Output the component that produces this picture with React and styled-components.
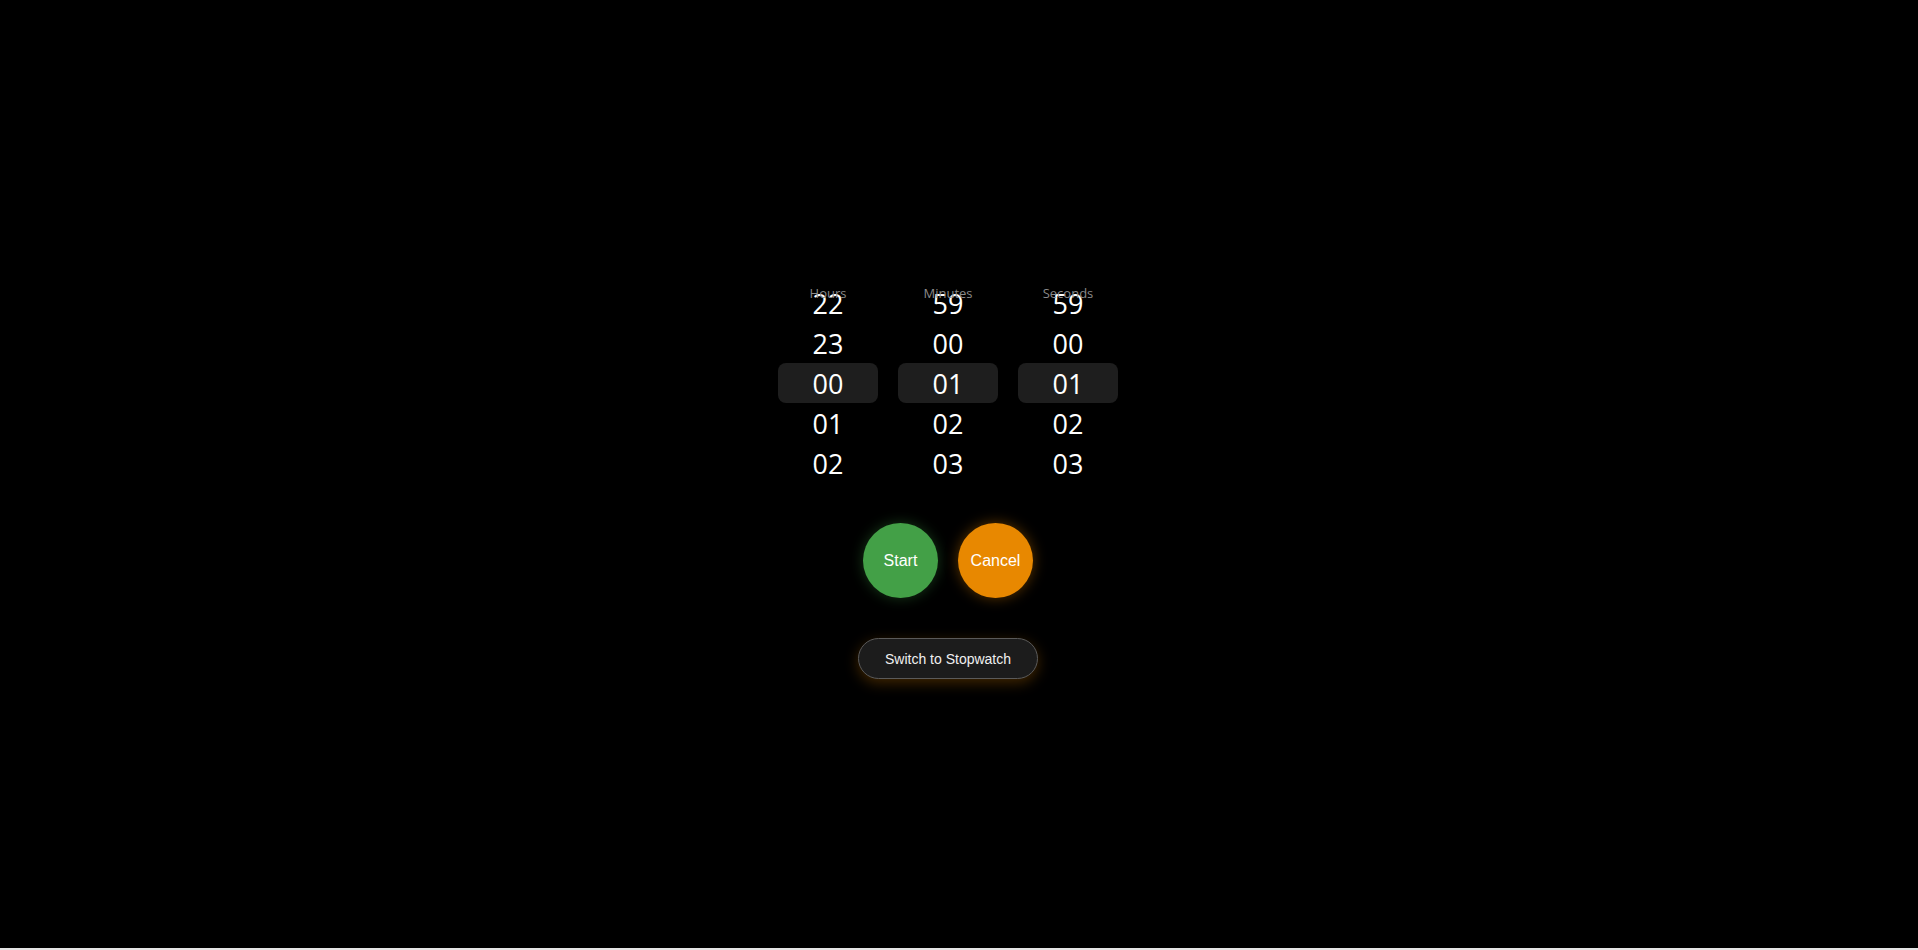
import React, { useState } from "react";
import styled, { createGlobalStyle } from "styled-components";

const GlobalStyle = createGlobalStyle`
  html, body {
    margin: 0;
    padding: 0;
    background: #e4e4e4;
  }
  * { box-sizing: border-box; }
`;

const Page = styled.div`
  height: 948px;
  background: #000;
  display: flex;
  flex-direction: column;
  align-items: center;
  justify-content: center;
  padding: 14px 22px 0 0;
  gap: 40px;
`;

const Picker = styled.div`
  display: flex;
  gap: 20px;
`;

const Column = styled.div`
  position: relative;
  width: 100px;
  height: 200px;
  display: flex;
  flex-direction: column;
`;

const Label = styled.span`
  position: absolute;
  top: 2px;
  left: 0;
  right: 0;
  text-align: center;
  font-family: "Open Sans", "Noto Sans", sans-serif;
  font-size: 13px;
  color: #8a8a8a;
  line-height: 16px;
`;

const Item = styled.div`
  position: relative;
  height: 40px;
  display: flex;
  align-items: center;
  justify-content: center;
  font-family: "Open Sans", "Noto Sans", sans-serif;
  font-size: 27px;
  color: #fff;
  border-radius: 8px;
  background: ${(p) => (p.$active ? "#1e1e1e" : "transparent")};
`;

const Controls = styled.div`
  display: flex;
  gap: 20px;
`;

const RoundButton = styled.button`
  width: 75px;
  height: 75px;
  border-radius: 50%;
  border: none;
  background: ${(p) => p.$color};
  box-shadow: 0 0 14px ${(p) => p.$glow};
  color: #fff;
  font-family: "Liberation Sans", Arial, sans-serif;
  font-size: 16px;
  cursor: pointer;
`;

const SwitchButton = styled.button`
  width: 180px;
  height: 41px;
  border-radius: 21px;
  border: 1px solid #5a5a5a;
  background: #1c1c1c;
  color: #f0f0f0;
  font-family: "Liberation Sans", Arial, sans-serif;
  font-size: 14px;
  box-shadow: 0 4px 14px rgba(232, 136, 0, 0.28);
  cursor: pointer;
`;

const pad = (n) => String(n).padStart(2, "0");

const columns = [
  { label: "Hours", max: 24, value: 0 },
  { label: "Minutes", max: 60, value: 1 },
  { label: "Seconds", max: 60, value: 1 },
];

function Wheel({ label, max, value }) {
  const rows = [-2, -1, 0, 1, 2].map((d) => (value + d + max) % max);
  return (
    <Column>
      {rows.map((n, i) => (
        <Item key={i} $active={i === 2}>
          {pad(n)}
        </Item>
      ))}
      <Label>{label}</Label>
    </Column>
  );
}

export default function App() {
  const [mode] = useState("timer");
  return (
    <>
      <GlobalStyle />
      <Page>
        <Picker>
          {columns.map((c) => (
            <Wheel key={c.label} {...c} />
          ))}
        </Picker>
        <Controls>
          <RoundButton $color="#43a047" $glow="rgba(67, 160, 71, 0.35)">
            Start
          </RoundButton>
          <RoundButton $color="#e88800" $glow="rgba(232, 136, 0, 0.4)">
            Cancel
          </RoundButton>
        </Controls>
        <SwitchButton>
          {mode === "timer" ? "Switch to Stopwatch" : "Switch to Timer"}
        </SwitchButton>
      </Page>
    </>
  );
}
